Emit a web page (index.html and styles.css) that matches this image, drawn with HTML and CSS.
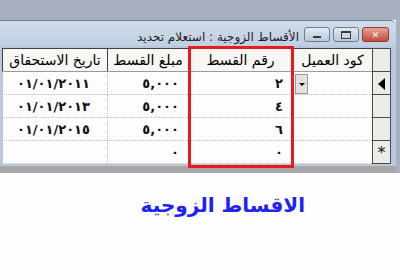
FILE: index.html
```html
<!DOCTYPE html>
<html lang="ar" dir="rtl">
<head>
  <meta charset="UTF-8">
  <title>الأقساط الزوجية</title>
  <link rel="stylesheet" href="styles.css">
</head>
<body>
  <div class="desktop"></div>
  <div class="window">
    <div class="titlebar">
      <div class="controls">
        <span class="btn close">&#10005;</span>
        <span class="btn max"><i class="max-box"></i></span>
        <span class="btn min"><i class="min-bar"></i></span>
      </div>
      <span class="title">الأقساط الزوجية : استعلام تحديد</span>
    </div>
    <div class="grid-wrap">
      <table class="grid">
        <colgroup>
          <col class="c-sel">
          <col class="c-cust">
          <col class="c-num">
          <col class="c-amt">
          <col class="c-date">
        </colgroup>
        <thead>
          <tr>
            <th class="sel"></th>
            <th>كود العميل</th>
            <th>رقم القسط</th>
            <th>مبلغ القسط</th>
            <th>تاريخ الاستحقاق</th>
          </tr>
        </thead>
        <tbody>
          <tr>
            <td class="sel"><span class="pointer"></span></td>
            <td class="cust"><span class="combo"><span class="arrow"></span></span></td>
            <td>٢</td>
            <td>٥,٠٠٠</td>
            <td class="date">٠١/٠١/٢٠١١</td>
          </tr>
          <tr>
            <td class="sel"></td>
            <td></td>
            <td>٤</td>
            <td>٥,٠٠٠</td>
            <td class="date">٠١/٠١/٢٠١٣</td>
          </tr>
          <tr>
            <td class="sel"></td>
            <td></td>
            <td>٦</td>
            <td>٥,٠٠٠</td>
            <td class="date">٠١/٠١/٢٠١٥</td>
          </tr>
          <tr>
            <td class="sel">*</td>
            <td></td>
            <td>٠</td>
            <td>٠</td>
            <td></td>
          </tr>
        </tbody>
      </table>
      <div class="highlight"></div>
    </div>
    <div class="status"></div>
  </div>
  <h1 class="caption">الاقساط الزوجية</h1>
</body>
</html>
```

FILE: styles.css
```css
body {
  margin: 0;
  width: 400px;
  height: 280px;
  overflow: hidden;
  background: #fdfdfd;
  font-family: "DejaVu Sans", sans-serif;
}

.desktop {
  height: 20px;
  background: #a9b0c0;
}

.window {
  background: #b8c9df;
  margin-left: -4px;
  margin-right: 4px;
  border-top-right-radius: 6px;
  position: relative;
}

.window::after {
  content: "";
  position: absolute;
  top: 0;
  right: -4px;
  width: 4px;
  height: 100%;
  background: #a9b0c0;
}

.titlebar {
  height: 26px;
  display: flex;
  align-items: flex-start;
  padding: 6px 7px 0 0;
  background: linear-gradient(#d1dcea, #bfcfe2);
  border-top: 1px solid #6f7f95;
  border-top-right-radius: 6px;
  box-sizing: border-box;
}

.controls {
  display: flex;
  gap: 3px;
  margin-left: 5px;
}

.btn {
  width: 26px;
  height: 15px;
  border: 1px solid #6d7c92;
  border-radius: 3px;
  background: linear-gradient(#e3eaf3, #b9c8da);
  display: flex;
  align-items: center;
  justify-content: center;
  box-sizing: border-box;
  font-size: 9px;
  font-weight: bold;
}

.btn.close {
  width: 27px;
  background: linear-gradient(#e5a59a, #c54b3a);
  border-color: #8d3c33;
  color: #ffffff;
}

.max-box {
  width: 8px;
  height: 5px;
  border: 1px solid #3b3b3b;
  border-top-width: 2px;
}

.min-bar {
  width: 8px;
  height: 2px;
  background: #3b3b3b;
  margin-top: 5px;
}

.title {
  font-size: 12px;
  color: #1e1e1e;
  margin-top: 3px;
  white-space: nowrap;
}

.grid-wrap {
  position: relative;
  margin-top: 2px;
  margin-right: 5px;
  margin-left: 7px;
  background: #f3f3f0;
}

.grid {
  border-collapse: collapse;
  table-layout: fixed;
  width: 388px;
  font-size: 13px;
}

.c-sel { width: 18px; }
.c-cust { width: 80px; }
.c-num { width: 104px; }
.c-amt { width: 81px; }
.c-date { width: 105px; }

.grid th {
  height: 22px;
  font-weight: normal;
  font-size: 14px;
  text-align: center;
  background: #f6f6f3;
  border: 1px solid #3f3f3f;
  border-bottom-color: #9a9a9a;
  padding: 0;
}

.grid td {
  height: 22px;
  padding: 0 9px;
  text-align: right;
  font-weight: bold;
  background: #fdfdfd;
  border-bottom: 1px dotted #bdbdbd;
  border-left: 1px dotted #bdbdbd;
  color: #111111;
}

.grid td.date {
  text-align: left;
  padding-left: 14px;
  letter-spacing: 2px;
}

.grid .sel {
  background: #ecebe6;
  border: 1px solid #4a4a4a;
  text-align: center;
  padding: 0;
  font-weight: normal;
  font-size: 16px;
}

.pointer {
  display: inline-block;
  width: 0;
  height: 0;
  border-top: 6px solid transparent;
  border-bottom: 6px solid transparent;
  border-right: 7px solid #000000;
  vertical-align: middle;
}

.cust {
  position: relative;
}

.combo {
  position: absolute;
  left: 2px;
  top: 2px;
  width: 11px;
  height: 18px;
  background: #e4e2dc;
  border: 1px solid #9a9a9a;
  display: flex;
  align-items: center;
  justify-content: center;
}

.arrow {
  border-left: 3px solid transparent;
  border-right: 3px solid transparent;
  border-top: 3px solid #000000;
}

.highlight {
  position: absolute;
  left: 185px;
  top: -2px;
  width: 100px;
  height: 116px;
  border: 3px solid #ea1920;
  pointer-events: none;
}

.status {
  height: 7px;
  background: #a6a6a6;
  margin-top: 2px;
}

.caption {
  margin: 20px 95px 0 0;
  font-size: 20px;
  font-weight: bold;
  color: #1e22f2;
  text-align: right;
}
```
